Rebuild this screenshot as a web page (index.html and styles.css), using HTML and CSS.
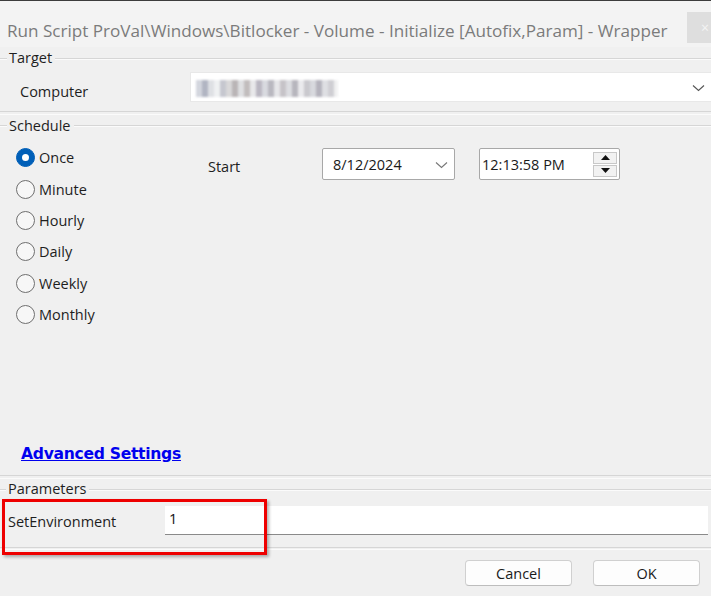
FILE: index.html
```html
<!DOCTYPE html>
<html>
<head>
<meta charset="utf-8">
<link rel="stylesheet" href="styles.css">
</head>
<body>
<div class="window">
  <div class="titlebar">
    <div class="title">Run Script ProVal\Windows\Bitlocker - Volume - Initialize [Autofix,Param] - Wrapper</div>
    <div class="close">×</div>
  </div>

  <section class="group target">
    <div class="ghead"><span class="gl"></span><span class="gtext">Target</span><span class="gr"></span></div>
    <div class="comp-row">
      <span class="lbl comp-lbl">Computer</span>
      <div class="combo">
        <div class="redact"></div>
        <svg class="chev" width="13" height="8" viewBox="0 0 13 8"><path d="M1 1.5 L6.5 6.5 L12 1.5" fill="none" stroke="#555" stroke-width="1.1"/></svg>
      </div>
    </div>
  </section>

  <section class="group schedule">
    <div class="ghead"><span class="gl"></span><span class="gtext">Schedule</span><span class="gr"></span></div>
    <div class="sched-body">
      <div class="radios">
        <label class="radio"><span class="dot checked"></span><span class="lbl">Once</span></label>
        <label class="radio"><span class="dot"></span><span class="lbl">Minute</span></label>
        <label class="radio"><span class="dot"></span><span class="lbl">Hourly</span></label>
        <label class="radio"><span class="dot"></span><span class="lbl">Daily</span></label>
        <label class="radio"><span class="dot"></span><span class="lbl">Weekly</span></label>
        <label class="radio"><span class="dot"></span><span class="lbl">Monthly</span></label>
      </div>
      <div class="start-row">
        <span class="lbl start-lbl">Start</span>
        <div class="datebox">
          <span class="val">8/12/2024</span>
          <svg class="chev2" width="13" height="8" viewBox="0 0 13 8"><path d="M1 1.5 L6.5 6.5 L12 1.5" fill="none" stroke="#777" stroke-width="1.1"/></svg>
        </div>
        <div class="timebox">
          <span class="val">12:13:58 PM</span>
          <div class="spin">
            <div class="sbtn"><svg width="9" height="5" viewBox="0 0 9 5"><path d="M0 5 L4.5 0 L9 5 Z" fill="#111"/></svg></div>
            <div class="sbtn"><svg width="9" height="5" viewBox="0 0 9 5"><path d="M0 0 L4.5 5 L9 0 Z" fill="#111"/></svg></div>
          </div>
        </div>
      </div>
    </div>
    <a class="adv" href="#">Advanced Settings</a>
  </section>

  <section class="group params">
    <div class="ghead"><span class="gl short"></span><span class="gtext">Parameters</span><span class="gr"></span></div>
    <div class="param-row">
      <span class="lbl param-lbl">SetEnvironment</span>
      <div class="pinput">1</div>
    </div>
  </section>

  <div class="footer">
    <button class="btn">Cancel</button>
    <button class="btn">OK</button>
  </div>

  <div class="highlight"></div>
</div>
</body>
</html>
```

FILE: styles.css
```css
* { box-sizing: border-box; }
html, body { margin: 0; padding: 0; }
body {
  width: 711px;
  height: 596px;
  overflow: hidden;
  background: #f0f0f0;
  font-family: "Open Sans", "Noto Sans", sans-serif;
  color: #1a1a1a;
}
.window {
  position: relative;
  width: 711px;
  height: 596px;
  display: flex;
  flex-direction: column;
}
.titlebar {
  height: 47px;
  flex: none;
  background: #f3f3f3;
  border-top: 1px solid #3c3c3c;
  display: flex;
  align-items: flex-start;
  justify-content: space-between;
}
.title {
  margin-top: 18px;
  padding-left: 7px;
  font-size: 17.1px;
  color: #7b7b7b;
  white-space: nowrap;
}
.close {
  margin-top: 11px;
  width: 24px;
  height: 31px;
  background: #dedede;
  color: #f4f4f4;
  font-size: 14px;
  display: flex;
  align-items: center;
  justify-content: flex-end;
  padding-right: 2px;
}
.group { display: flex; flex-direction: column; flex: none; }
.group::after {
  content: "";
  display: block;
  height: 2px;
  border-top: 1px solid #d6d6d6;
  border-bottom: 1px solid #fbfbfb;
}
.ghead {
  height: 22px;
  display: flex;
  align-items: center;
}
.gl, .gr {
  height: 2px;
  border-top: 1px solid #d6d6d6;
  border-bottom: 1px solid #fbfbfb;
}
.gl { width: 7px; margin-top: 2px; }
.gl.short { width: 6px; }
.gr { flex: 1; margin-top: 2px; margin-left: 3px; }
.gtext {
  font-size: 14.5px;
  color: #1e1e1e;
  padding-left: 2px;
}
.lbl { font-size: 14.5px; color: #1e1e1e; }

/* Target: 47 -> 115 */
.target { height: 68px; }
.target::after { margin-top: 9px; }
.comp-row {
  margin-top: 4px;
  display: flex;
  align-items: flex-start;
}
.comp-lbl { margin-left: 20px; width: 170px; margin-top: 10px; }
.combo {
  flex: 1;
  height: 30px;
  background: #fff;
  border: 1px solid #e8e8e8;
  border-right: none;
  display: flex;
  align-items: center;
  justify-content: space-between;
  padding: 0 6px 0 5px;
}
.redact {
  width: 142px;
  height: 17px;
  margin-top: 2px;
  background:
    linear-gradient(90deg,
      #c9ccd6 0 6px, #9ea3b3 6px 12px, #d7d9de 12px 18px, #eceef0 18px 24px,
      #b8bac4 24px 30px, #d0cfd0 30px 36px, #a9a3a5 36px 42px, #d8d9dc 42px 48px,
      #b3adad 48px 54px, #e3e3e6 54px 60px, #aaa6b3 60px 66px, #cfd1d8 66px 72px,
      #a8a7b1 72px 78px, #e1e1e4 78px 84px, #b9b5bb 84px 90px, #d4d5da 90px 96px,
      #a6a4ad 96px 102px, #e6e6e9 102px 108px, #bdbcc2 108px 114px, #cfd0d6 114px 120px,
      #a3a1ad 120px 126px, #d7d8dd 126px 132px, #c4c3c9 132px 138px, #eeeeef 138px 142px);
  filter: blur(0.8px);
  opacity: 0.8;
}
.chev { margin-top: 1px; }

/* Schedule: 115 -> 479 */
.schedule { height: 364px; }
.schedule .ghead { height: 20px; }
.schedule::after { margin-top: 11px; }
.sched-body {
  display: flex;
  align-items: flex-start;
  flex: 1;
}
.radios {
  width: 208px;
  padding-top: 7px;
  padding-left: 16px;
  display: flex;
  flex-direction: column;
}
.radio {
  height: 31.4px;
  display: flex;
  align-items: center;
  gap: 4px;
}
.dot {
  width: 19px;
  height: 19px;
  border-radius: 50%;
  border: 1px solid #6f6f6f;
  background: #f7f7f7;
  display: flex;
  align-items: center;
  justify-content: center;
}
.dot.checked {
  background: #005fb8;
  border-color: #005fb8;
}
.dot.checked::after {
  content: "";
  width: 7px;
  height: 7px;
  border-radius: 50%;
  background: #fff;
}
.start-row {
  margin-top: 13px;
  display: flex;
  align-items: flex-start;
}
.start-lbl { width: 114px; margin-top: 9px; }
.datebox, .timebox {
  height: 32px;
  background: #fff;
  border: 1px solid #a8a8a8;
  border-radius: 2px;
  display: flex;
  align-items: center;
}
.datebox {
  width: 133px;
  padding: 0 6px 0 10px;
  justify-content: space-between;
}
.timebox {
  margin-left: 24px;
  width: 141px;
  padding: 0 2px 0 2px;
  justify-content: space-between;
}
.val { font-size: 14.5px; color: #1a1a1a; }
.chev2 { margin-top: 1px; }
.spin {
  width: 24px;
  height: 25px;
  display: flex;
  flex-direction: column;
  gap: 1px;
}
.sbtn {
  flex: 1;
  background: #f2f2f2;
  border: 1px solid #c8c8c8;
  display: flex;
  align-items: center;
  justify-content: center;
}
.adv {
  margin-left: 21px;
  font-family: "DejaVu Sans", Verdana, sans-serif;
  font-weight: bold;
  font-size: 15.6px;
  line-height: 20px;
  color: #0000ee;
  text-decoration: underline;
  letter-spacing: -0.3px;
  align-self: flex-start;
}

/* Parameters: 479 -> 550 */
.params { height: 71px; }
.params .ghead { height: 20px; }
.params::after { margin-top: 12px; }
.param-row {
  margin-top: 8px;
  display: flex;
  align-items: flex-start;
}
.param-lbl { margin-left: 8px; width: 157px; margin-top: 6px; }
.pinput {
  width: 543px;
  height: 29px;
  background: #fff;
  border-bottom: 1px solid #8a8a8a;
  font-size: 14.5px;
  padding: 3px 0 0 4px;
  color: #111;
}

.footer {
  flex: 1;
  display: flex;
  justify-content: flex-end;
  align-items: flex-start;
  padding-top: 10px;
  padding-right: 11px;
  gap: 21px;
}
.btn {
  width: 107px;
  height: 26px;
  background: #fdfdfd;
  border: 1px solid #d0d0d0;
  border-bottom-color: #bdbdbd;
  border-radius: 4px;
  font-family: "Open Sans", "Noto Sans", sans-serif;
  font-size: 14.5px;
  color: #1a1a1a;
  padding: 0;
}
.highlight {
  position: absolute;
  left: 2px;
  top: 499px;
  width: 265px;
  height: 56px;
  border: 3px solid #ee0000;
  box-shadow: 2px 2px 3px rgba(0,0,0,0.3);
  pointer-events: none;
}
```
